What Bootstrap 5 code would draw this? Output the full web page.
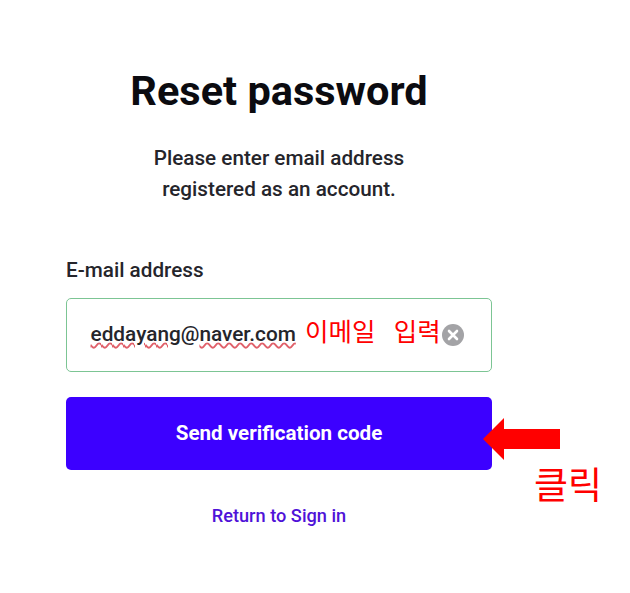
<!DOCTYPE html>
<html lang="en">
<head>
<meta charset="utf-8">
<title>Reset password</title>
<link href="https://cdn.jsdelivr.net/npm/bootstrap@5.3.0/dist/css/bootstrap.min.css" rel="stylesheet">
<style>
html,body{background:#fff;font-family:Roboto,"Noto Sans CJK KR",sans-serif;margin:0}
.reset-page{width:630px;height:593px;position:relative;overflow:hidden}
.reset-box{width:426px;margin-left:66px;padding-top:66px}
.reset-title{font-size:41.5px;font-weight:700;line-height:50px;color:#0b0b10;margin:0 0 27px}
.reset-sub{font-size:20.7px;font-weight:500;line-height:31px;color:#25252b;margin:0 0 50px}
.reset-label{font-size:20.7px;font-weight:500;line-height:31px;color:#25252b;margin:0 0 12px;display:block}
.reset-field{height:74px;border:1.5px solid #7cc594;border-radius:5px;padding:0 27px 0 23.5px;background:#fff}
.reset-value{font-size:20.8px;font-weight:500;color:#25252b}
.reset-wave{text-decoration:underline wavy #e0606a 1.5px;text-underline-offset:1px}
.reset-clear{width:22px;height:22px;display:block}
.reset-btn{height:73px;margin-top:25px;background:#3c00ff;border:0;border-radius:5px;font-size:20.6px;font-weight:700;color:#fff}
.reset-btn:hover{background:#3c00ff;color:#fff}
.reset-link{font-size:18.2px;font-weight:500;line-height:26px;color:#4f12d8;margin-top:33px;text-decoration:none}
.note-ko{position:absolute;color:#f00;font-family:"Noto Sans CJK KR",sans-serif;font-weight:400;line-height:1;white-space:pre}
.note-input{left:305px;top:317px;font-size:25.5px;word-spacing:3.5px}
.note-click{left:534px;top:465px;font-size:37px}
.note-arrow{position:absolute;left:483px;top:418px;width:78px;height:42px}
</style>
</head>
<body>
<div class="reset-page">
  <main class="reset-box d-flex flex-column">
    <h1 class="reset-title text-center">Reset password</h1>
    <p class="reset-sub text-center">Please enter email address<br>registered as an account.</p>
    <label class="reset-label" for="addr">E-mail address</label>
    <div class="reset-field d-flex align-items-center justify-content-between">
      <span class="reset-value" id="addr"><span class="reset-wave">eddayang</span>@<span class="reset-wave">naver.com</span></span>
      <svg class="reset-clear" viewBox="0 0 22 22" aria-hidden="true"><circle cx="11" cy="11" r="11" fill="#a3a3a6"/><path d="M7 7l8 8M15 7l-8 8" stroke="#fff" stroke-width="2.6" stroke-linecap="round"/></svg>
    </div>
    <button class="btn reset-btn w-100" type="button">Send verification code</button>
    <a class="reset-link text-center" href="#">Return to Sign in</a>
  </main>
  <span class="note-ko note-input">이메일  입력</span>
  <svg class="note-arrow" viewBox="0 0 78 42" aria-hidden="true"><path d="M0 21L21 0V11H77V31H21V42Z" fill="#f00"/></svg>
  <span class="note-ko note-click">클릭</span>
</div>
<script src="https://cdn.jsdelivr.net/npm/bootstrap@5.3.0/dist/js/bootstrap.bundle.min.js"></script>
</body>
</html>
